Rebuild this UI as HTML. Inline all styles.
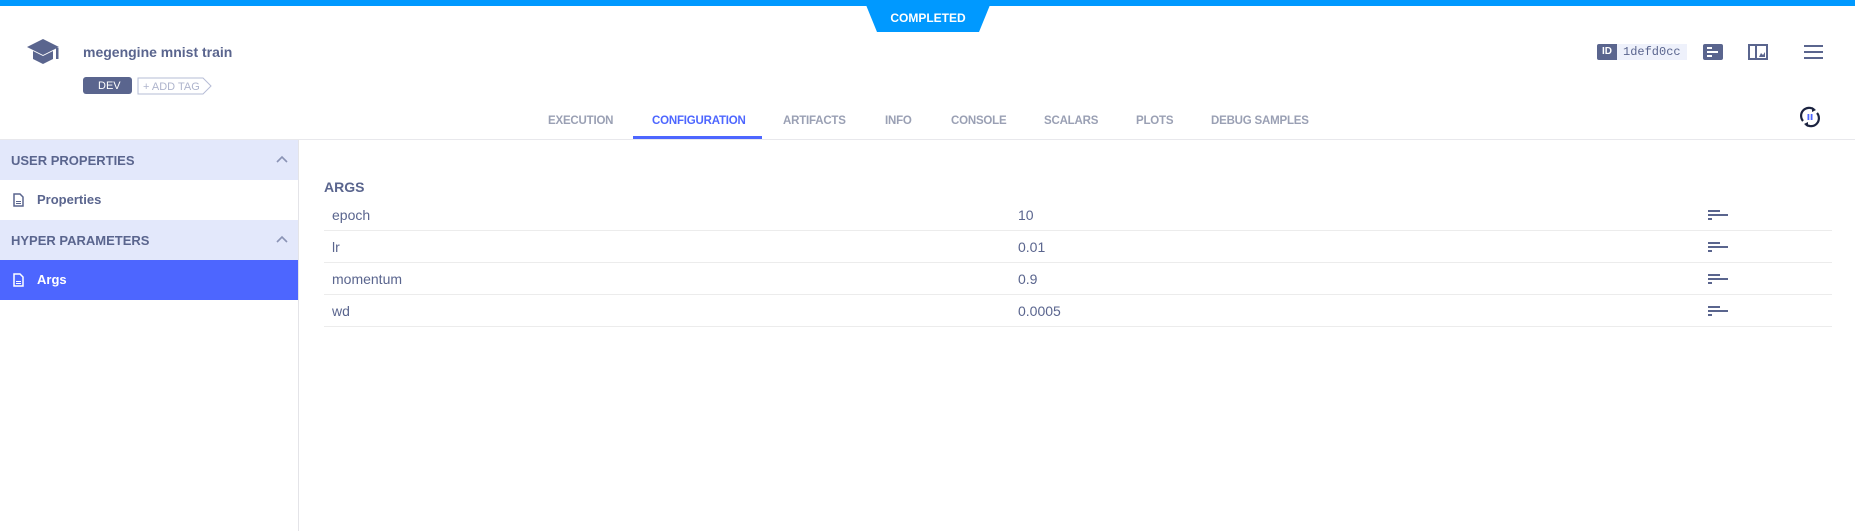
<!DOCTYPE html>
<html><head><style>
*{margin:0;padding:0;box-sizing:border-box}
body{width:1855px;height:531px;overflow:hidden;background:#fff;font-family:"Liberation Sans",sans-serif;color:#5a658e;position:relative}
.a{position:absolute}
.tab{position:absolute;top:115px;font-size:11.5px;font-weight:bold;color:#9aa0b4;letter-spacing:-0.2px}
.row{position:absolute;left:324px;width:1508px;height:32px;border-bottom:1px solid #ececec;font-size:14px;color:#5a658e}
.row span{position:absolute;top:8px}
.ic{position:absolute;left:1384px;top:10px;width:20px;height:12px}
</style></head><body>
<div class="a" style="left:0;top:0;width:1855px;height:6px;background:#0099ff"></div>
<svg class="a" style="left:866px;top:5px" width="124" height="28"><polygon points="0,0 124,0 113,27 11,27" fill="#0099ff"/></svg>
<div class="a" style="left:866px;top:11px;width:124px;text-align:center;color:#fff;font-size:12px;font-weight:bold">COMPLETED</div>
<svg class="a" style="left:26px;top:38px" width="34" height="28" viewBox="0 0 34 28"><polygon points="17,1 33,9 17,17 1,9" fill="#5a658e"/><path d="M7,13 v8 l10,5 l10,-5 v-8 l-10,5z" fill="#5a658e"/><rect x="30" y="10" width="2.5" height="11" fill="#5a658e"/></svg>
<div class="a" style="left:83px;top:44px;font-size:14px;font-weight:bold;color:#5a658e">megengine mnist train</div>
<div class="a" style="left:83px;top:77px;width:49px;height:17px;background:#5a658e;border-radius:3px;color:#fff;font-size:11px;line-height:18px;padding-left:15px">DEV</div>
<svg class="a" style="left:137px;top:77px" width="76" height="18"><path d="M1,1 H66 L74,9 L66,17 H1 Z" fill="none" stroke="#b6bcd6"/></svg>
<div class="a" style="left:143px;top:81px;font-size:11px;color:#aeb4cc">+ ADD TAG</div>
<div class="tab" style="left:548px">EXECUTION</div>
<div class="tab" style="left:652px;color:#4d66ff">CONFIGURATION</div>
<div class="tab" style="left:783px">ARTIFACTS</div>
<div class="tab" style="left:885px">INFO</div>
<div class="tab" style="left:951px">CONSOLE</div>
<div class="tab" style="left:1044px">SCALARS</div>
<div class="tab" style="left:1136px">PLOTS</div>
<div class="tab" style="left:1211px">DEBUG SAMPLES</div>
<div class="a" style="left:633px;top:136px;width:129px;height:3px;background:#4d66ff"></div>
<div class="a" style="left:0;top:139px;width:1855px;height:1px;background:#e8e8ec"></div>
<div class="a" style="left:1597px;top:44px;width:20px;height:16px;background:#5a658e;border-radius:2px 0 0 2px;color:#fff;font-size:10px;font-weight:bold;text-align:center;line-height:16px">ID</div>
<div class="a" style="left:1617px;top:44px;width:70px;height:16px;background:#eef1fb;font-family:'Liberation Mono',monospace;font-size:12px;line-height:16px;padding-left:6px">1defd0cc</div>
<svg class="a" style="left:1703px;top:44px" width="20" height="16"><rect width="20" height="16" rx="2" fill="#5a658e"/><rect x="4" y="3" width="5" height="2" fill="#fff"/><rect x="4" y="7" width="11" height="2" fill="#fff"/><rect x="4" y="11" width="5" height="2" fill="#fff"/></svg>
<svg class="a" style="left:1748px;top:44px" width="20" height="16"><rect x="1" y="1" width="18" height="14" fill="none" stroke="#5a658e" stroke-width="2"/><rect x="7" y="1" width="2" height="14" fill="#5a658e"/><path d="M11,13 L13,9 L15,11 L17,8 V13Z" fill="#5a658e"/></svg>
<svg class="a" style="left:1804px;top:45px" width="19" height="14"><rect y="0" width="19" height="2" fill="#5a658e"/><rect y="6" width="19" height="2" fill="#5a658e"/><rect y="12" width="19" height="2" fill="#5a658e"/></svg>
<svg class="a" style="left:1799px;top:106px" width="22" height="22" viewBox="0 0 22 22"><path d="M4,15 A8,8 0 0 1 15,3.5" fill="none" stroke="#1b2340" stroke-width="2.2"/><path d="M18,7 A8,8 0 0 1 7,18.5" fill="none" stroke="#1b2340" stroke-width="2.2"/><path d="M13,1 L17,4 L13,6Z" fill="#1b2340"/><path d="M9,21 L5,18 L9,16Z" fill="#1b2340"/><rect x="8.5" y="8" width="1.8" height="6" fill="#4d66ff"/><rect x="11.7" y="8" width="1.8" height="6" fill="#4d66ff"/></svg>
<div class="a" style="left:0;top:140px;width:298px;height:40px;background:#e3e8fb"></div>
<div class="a" style="left:11px;top:153px;font-size:13px;font-weight:bold">USER PROPERTIES</div>
<svg class="a" style="left:276px;top:155px" width="12" height="8"><path d="M1,7 L6,2 L11,7" fill="none" stroke="#8a93b5" stroke-width="1.6"/></svg>
<svg class="a" style="left:13px;top:193px" width="11" height="14"><path d="M1,1 H7 L10,4 V13 H1Z" fill="none" stroke="#5a658e" stroke-width="1.5"/><rect x="3" y="8" width="5" height="1" fill="#5a658e"/><rect x="3" y="10" width="5" height="1" fill="#5a658e"/></svg>
<div class="a" style="left:37px;top:192px;font-size:13px;font-weight:bold">Properties</div>
<div class="a" style="left:0;top:220px;width:298px;height:40px;background:#e3e8fb"></div>
<div class="a" style="left:11px;top:233px;font-size:13px;font-weight:bold">HYPER PARAMETERS</div>
<svg class="a" style="left:276px;top:235px" width="12" height="8"><path d="M1,7 L6,2 L11,7" fill="none" stroke="#8a93b5" stroke-width="1.6"/></svg>
<div class="a" style="left:0;top:260px;width:298px;height:40px;background:#4d66ff"></div>
<svg class="a" style="left:13px;top:273px" width="11" height="14"><path d="M1,1 H7 L10,4 V13 H1Z" fill="none" stroke="#fff" stroke-width="1.5"/><rect x="3" y="8" width="5" height="1" fill="#fff"/><rect x="3" y="10" width="5" height="1" fill="#fff"/></svg>
<div class="a" style="left:37px;top:272px;font-size:13px;font-weight:bold;color:#fff">Args</div>
<div class="a" style="left:298px;top:140px;width:1px;height:391px;background:#e4e4e8"></div>
<div class="a" style="left:324px;top:179px;font-size:14px;font-weight:bold">ARGS</div>
<div class="row" style="top:199px"><span style="left:8px">epoch</span><span style="left:694px">10</span><svg class="ic"><rect y="1" width="12" height="2" fill="#5a658e"/><rect y="5" width="20" height="2" fill="#5a658e"/><rect y="9" width="4" height="2" fill="#5a658e"/></svg></div>
<div class="row" style="top:231px"><span style="left:8px">lr</span><span style="left:694px">0.01</span><svg class="ic"><rect y="1" width="12" height="2" fill="#5a658e"/><rect y="5" width="20" height="2" fill="#5a658e"/><rect y="9" width="4" height="2" fill="#5a658e"/></svg></div>
<div class="row" style="top:263px"><span style="left:8px">momentum</span><span style="left:694px">0.9</span><svg class="ic"><rect y="1" width="12" height="2" fill="#5a658e"/><rect y="5" width="20" height="2" fill="#5a658e"/><rect y="9" width="4" height="2" fill="#5a658e"/></svg></div>
<div class="row" style="top:295px"><span style="left:8px">wd</span><span style="left:694px">0.0005</span><svg class="ic"><rect y="1" width="12" height="2" fill="#5a658e"/><rect y="5" width="20" height="2" fill="#5a658e"/><rect y="9" width="4" height="2" fill="#5a658e"/></svg></div>
</body></html>
